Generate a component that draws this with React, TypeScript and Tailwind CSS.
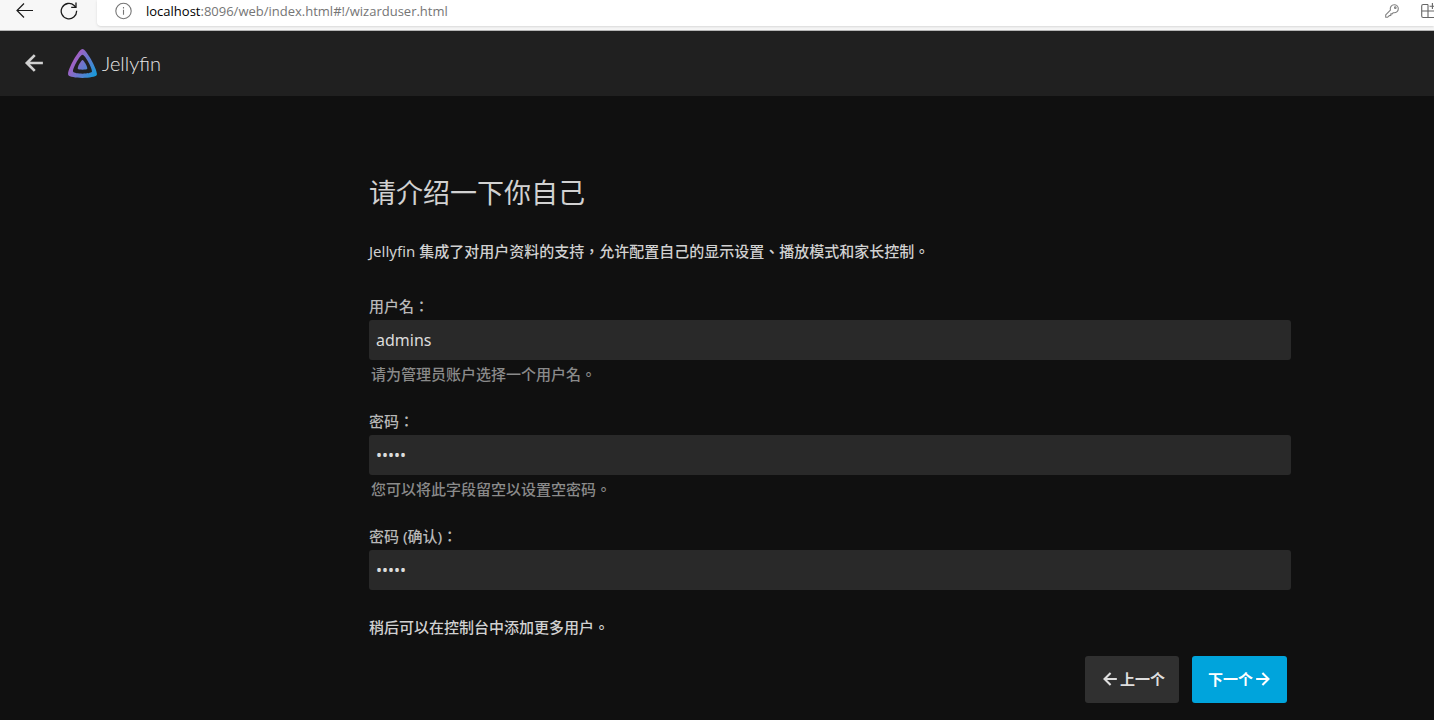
import { useState } from "react";

interface FieldProps {
  id: string;
  label: string;
  type?: string;
  initial: string;
  hint?: string;
}

function Field({ id, label, type = "text", initial, hint }: FieldProps) {
  const [value, setValue] = useState(initial);

  return (
    <div className="flex flex-col">
      <label htmlFor={id} className="h-6 text-[15px] leading-5 text-[#b8b8b8]">
        {label}
      </label>
      <input
        id={id}
        type={type}
        value={value}
        onChange={(e) => setValue(e.target.value)}
        aria-describedby={hint ? `${id}-hint` : undefined}
        className="h-10 w-full rounded-[3px] bg-[#292929] px-[7px] text-base font-normal text-[#dcdcdc] outline-none"
      />
      {hint && (
        <p id={`${id}-hint`} className="mt-1 pl-0.5 text-[15px] leading-5 text-[#8a8a8a]">
          {hint}
        </p>
      )}
    </div>
  );
}

function ArrowBack({ size }: { size: number }) {
  return (
    <svg width={size} height={size} viewBox="0 0 24 24" fill="none" stroke="currentColor" strokeWidth="2.5">
      <path d="M20.2 12H5.5M12.700 4.700L5.400 12l7.300 7.300" />
    </svg>
  );
}

function ArrowForward({ size }: { size: number }) {
  return (
    <svg width={size} height={size} viewBox="0 0 24 24" fill="none" stroke="currentColor" strokeWidth="2.5">
      <path d="M3.800 12h14.700M11.300 4.700l7.300 7.300-7.300 7.300" />
    </svg>
  );
}

function BrowserBar() {
  return (
    <div className="flex h-[31px] border-b border-[#b5b5b5] bg-[#f7f7f7]">
      <button type="button" aria-label="Back" className="ml-4 h-[22px] w-[18px]">
        <svg width="18" height="22" viewBox="0 0 18 22" fill="none" stroke="#1b1b1b" strokeWidth="1.2">
          <path d="M17 10.5H1.5M8 3.5l-7 7 7 7" />
        </svg>
      </button>
      <button type="button" aria-label="Reload" className="ml-[26px] h-[22px] w-[18px]">
        <svg width="18" height="22" viewBox="0 0 18 22" fill="none" stroke="#1b1b1b" strokeWidth="1.3">
          <path d="M16.6 10.8a7.7 7.7 0 1 1-2.4-5.3l1.5 1.7" />
          <path d="M16 2.6v4.8h-4.8" />
        </svg>
      </button>
      <div className="ml-[19px] flex h-[26px] flex-1 rounded-bl bg-white pl-[18px] shadow-sm">
        <svg width="17" height="22" viewBox="0 0 17 22" fill="none" stroke="#767676" strokeWidth="1.1">
          <circle cx="8.5" cy="11" r="7.7" />
          <path d="M8.5 9.8v5M8.5 7v1.4" />
        </svg>
        <p className="ml-[14px] flex-1 font-['Open_Sans','Noto_Sans',sans-serif] text-[13px] leading-[22px] font-normal text-[#757575]">
          <span className="text-black">localhost</span>:8096/web/index.html#!/wizarduser.html
        </p>
        <svg
          className="mr-[22px]"
          width="14"
          height="22"
          viewBox="0 0 14 22"
          fill="none"
          stroke="#808080"
          strokeWidth="1.1"
          strokeLinejoin="round"
        >
          <path d="M5.4 10.1C4.7 7.2 6.5 4.8 9.2 4.8c2.3 0 4.1 1.7 4.1 3.9 0 2.7-2.3 4.5-5 4l-1.1 1.2H5.8v1.5l-1.5.2-1.6 1.6H.7v-2.3z" />
          <circle cx="10.3" cy="7.7" r=".8" />
        </svg>
        <svg width="13" height="22" viewBox="0 0 13 22" fill="none" stroke="#666" strokeWidth="1.1">
          <path d="M7 4.5H2.2A1.5 1.5 0 0 0 .7 6v10a1.5 1.5 0 0 0 1.5 1.5H13M7 4.5v13M.7 11H13M11.4 3v6M8.5 6.2H13" />
        </svg>
      </div>
    </div>
  );
}

function Logo() {
  return (
    <div className="flex items-center gap-[5px]">
      <svg width="29" height="29" viewBox="55 56 402 401" aria-hidden="true">
        <defs>
          <linearGradient id="logo-fill" gradientUnits="userSpaceOnUse" x1="110.25" y1="213.3" x2="496.14" y2="436.09">
            <stop offset="0" stopColor="#aa5cc3" />
            <stop offset="1" stopColor="#00a4dc" />
          </linearGradient>
        </defs>
        <g fill="url(#logo-fill)">
          <path d="M190.56 329.07c8.63 17.3 122.4 17.12 130.93 0 8.52-17.1-47.9-119.78-65.46-119.8-17.57 0-74.1 102.5-65.47 119.8z" />
          <path d="M58.75 417.03c25.97 52.15 368.86 51.55 394.55 0S308.93 56.08 256.03 56.08c-52.92 0-223.25 308.8-197.28 360.95zm68.04-45.25c-17.02-34.17 94.6-236.5 129.26-236.5 34.67 0 146.1 202.7 129.26 236.5-16.83 33.8-241.5 34.17-258.52 0z" />
        </g>
      </svg>
      <span className="pb-0.5 font-['Lato',sans-serif] text-[20px] leading-6 font-light text-[#e8e8e8]">
        Jellyfin
      </span>
    </div>
  );
}

export default function App() {
  return (
    <div
      lang="zh-Hant"
      className="min-h-screen bg-[#101010] font-['Noto_Sans','Noto_Sans_CJK_TC',sans-serif] font-medium text-[#d1d1d1]"
    >
      <BrowserBar />

      <header className="flex h-[65px] items-center gap-[21px] bg-[#202020] pl-[21px]">
        <button type="button" aria-label="返回" className="pb-0.5">
          <ArrowBack size={26} />
        </button>
        <Logo />
      </header>

      <main className="mr-[143px] ml-[369px] pt-[77px] pb-4">
        <h1 className="text-[27px] leading-10 font-normal">请介绍一下你自己</h1>
        <p className="mt-7 text-[15px] leading-5">
          <span className="font-normal">Jellyfin</span> 集成了对用户资料的支持，允许配置自己的显示设置、播放模式和家长控制。
        </p>

        <form className="mt-[35px]" onSubmit={(e) => e.preventDefault()}>
          <div className="flex flex-col gap-[27px]">
            <Field id="username" label="用户名：" initial="admins" hint="请为管理员账户选择一个用户名。" />
            <Field
              id="password"
              label="密码："
              type="password"
              initial="admin"
              hint="您可以将此字段留空以设置空密码。"
            />
            <Field id="password-confirm" label="密码 (确认)：" type="password" initial="admin" />
            <p className="text-[15px] leading-5">稍后可以在控制台中添加更多用户。</p>
          </div>

          <div className="mt-[19px] flex justify-end gap-[13px] pr-1 text-[15px] leading-5 font-bold">
            <button
              type="button"
              className="flex h-[47px] items-center rounded-[3px] bg-[#303030] pr-[14px] pb-0.5 pl-[15px] text-[#dedede]"
            >
              <ArrowBack size={20} />
              上一个
            </button>
            <button
              type="submit"
              className="flex h-[47px] items-center rounded-[3px] bg-[#00a4dc] pr-[14px] pb-0.5 pl-4 text-white"
            >
              下一个
              <ArrowForward size={20} />
            </button>
          </div>
        </form>
      </main>
    </div>
  );
}
